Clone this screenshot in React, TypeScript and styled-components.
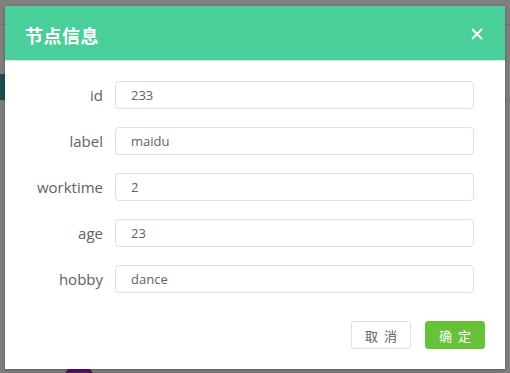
import React from "react";
import styled, { createGlobalStyle } from "styled-components";

const Global = createGlobalStyle`
  html, body { margin: 0; padding: 0; }
  body { font-family: "Open Sans", "Noto Sans CJK SC", sans-serif; }
`;

const Page = styled.div`
  position: relative;
  width: 510px;
  height: 373px;
  overflow: hidden;
  background: #ffffff;
`;

const Backdrop = styled.div`
  position: absolute;
  inset: 0;
  background: rgba(0, 0, 0, 0.5);
`;

const BgTag = styled.div`
  position: absolute;
  left: 0;
  top: 74px;
  width: 6px;
  height: 26px;
  background: #3a9ea5;
`;

const BgCircle = styled.div`
  position: absolute;
  left: 64px;
  top: 364px;
  width: 30px;
  height: 30px;
  border-radius: 50%;
  background: #a02dc8;
`;

const BgLine = styled.div<{ $top: number }>`
  position: absolute;
  left: 0;
  right: 0;
  top: ${(p) => p.$top}px;
  height: 1px;
  background: #e4e4e4;
`;

const Layer = styled.div`
  position: absolute;
  inset: 0;
  padding: 6px 5px 4px 5px;
  display: flex;
  align-items: flex-start;
`;

const Dialog = styled.div`
  width: 500px;
  height: 363px;
  background: #fff;
  display: flex;
  flex-direction: column;
  box-shadow: 0 1px 3px rgba(0, 0, 0, 0.3);
`;

const Header = styled.div`
  height: 54px;
  background: #4acf9a;
  border-bottom: 1px solid #e0e0e0;
  display: flex;
  align-items: center;
  justify-content: space-between;
  padding: 0 22px 0 20px;
`;

const Title = styled.div`
  color: #fff;
  font-family: "Noto Sans CJK SC", sans-serif;
  font-size: 18px;
  font-weight: 700;
  letter-spacing: 0.5px;
  margin-top: 3px;
`;

const Close = styled.button`
  border: 0;
  background: transparent;
  padding: 0;
  width: 12px;
  height: 12px;
  display: flex;
  margin-top: 1px;
`;

const Body = styled.div`
  padding: 20px 31px 0 20px;
  display: flex;
  flex-direction: column;
  gap: 18px;
`;

const Row = styled.div`
  display: grid;
  grid-template-columns: 78px 1fr;
  column-gap: 12px;
  align-items: center;
`;

const Label = styled.label`
  text-align: right;
  font-size: 15px;
  color: #606266;
  line-height: 28px;
`;

const Input = styled.div`
  height: 26px;
  border: 1px solid #dcdfe6;
  border-radius: 4px;
  padding: 0 15px;
  font-size: 13px;
  color: #606266;
  line-height: 26px;
`;

const Footer = styled.div`
  margin-top: auto;
  padding: 0 20px 20px 0;
  display: flex;
  justify-content: flex-end;
  gap: 14px;
`;

const Button = styled.button<{ $primary?: boolean }>`
  width: 60px;
  height: 28px;
  border-radius: 3px;
  border: 1px solid ${(p) => (p.$primary ? "#67c23a" : "#dcdfe6")};
  background: ${(p) => (p.$primary ? "#67c23a" : "#fff")};
  color: ${(p) => (p.$primary ? "#fff" : "#606266")};
  font-family: "Noto Sans CJK SC", sans-serif;
  font-size: 13px;
  letter-spacing: 6px;
  padding: 0 0 0 6px;
`;

const fields = [
  ["id", "233"],
  ["label", "maidu"],
  ["worktime", "2"],
  ["age", "23"],
  ["hobby", "dance"],
];

export default function App() {
  return (
    <Page>
      <Global />
      <BgLine $top={24} />
      <BgLine $top={100} />
      <BgTag />
      <BgCircle />
      <Backdrop />
      <Layer>
        <Dialog>
          <Header>
            <Title>节点信息</Title>
            <Close aria-label="close">
              <svg width="12" height="12" viewBox="0 0 12 12">
                <path d="M1 1 L11 11 M11 1 L1 11" stroke="#fff" strokeWidth="1.8" />
              </svg>
            </Close>
          </Header>
          <Body>
            {fields.map(([k, v]) => (
              <Row key={k}>
                <Label>{k}</Label>
                <Input>{v}</Input>
              </Row>
            ))}
          </Body>
          <Footer>
            <Button>取消</Button>
            <Button $primary>确定</Button>
          </Footer>
        </Dialog>
      </Layer>
    </Page>
  );
}
